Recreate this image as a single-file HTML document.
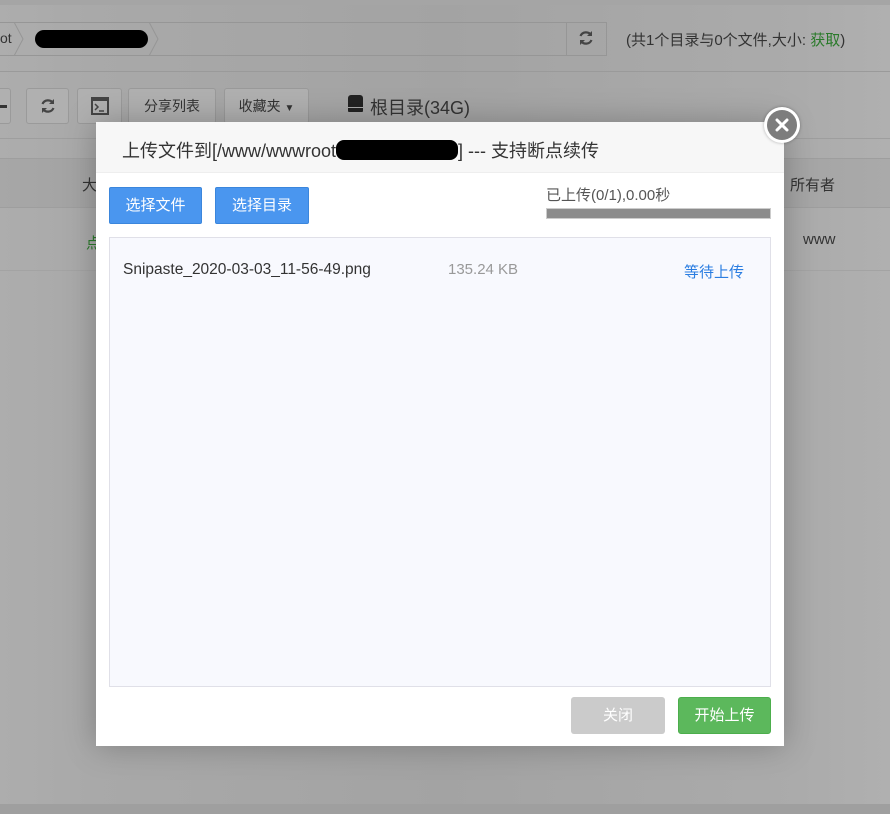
<!DOCTYPE html>
<html style="background:#afafaf"><head><meta charset="utf-8"><style>
*{box-sizing:border-box;margin:0;padding:0}
body{width:890px;height:814px;overflow:hidden;background:#afafaf;font-family:"Liberation Sans","Noto Sans CJK SC",sans-serif;position:relative;font-size:14px;color:#333}
.a{position:absolute}
.btn{position:absolute;border:1px solid #9a9a9a;border-radius:3px;background:#b0b0b0;color:#333;font-size:14px;text-align:center;line-height:34px}
</style></head><body>
<div class="a" style="left:0;top:0;width:890px;height:814px;background:linear-gradient(90deg,#adadad 0%,#a9a9a9 10%,#a3a3a3 50%,#ababab 90%,#b0b0b0 100%)"></div>
<div class="a" style="left:0;top:0;width:890px;height:5px;background:#a5a5a5"></div>
<div class="a" style="left:-2px;top:22px;width:609px;height:34px;border:1px solid #969696"></div>
<div class="a" style="left:0;top:30px;font-size:14px;color:#333">ot</div>
<svg class="a" style="left:0;top:22px" width="170" height="34"><path d="M14 0 L23 17 L14 34" fill="none" stroke="#969696"/><path d="M149 0 L158 17 L149 34" fill="none" stroke="#969696"/></svg>
<div class="a" style="left:35px;top:30px;width:113px;height:18px;background:#000;border-radius:9px"></div>
<div class="a" style="left:566px;top:22px;width:41px;height:34px;border-left:1px solid #969696"></div>
<svg class="a" style="left:577px;top:29px" width="18" height="18" viewBox="0 0 18 18"><path d="M14 6 A6 6 0 0 0 3.5 7" fill="none" stroke="#444" stroke-width="2.2"/><path d="M4 12 A6 6 0 0 0 14.5 11" fill="none" stroke="#444" stroke-width="2.2"/><path d="M15 2 L15 7 L10 7Z" fill="#444"/><path d="M3 16 L3 11 L8 11Z" fill="#444"/></svg>
<div class="a" style="left:626px;top:29px;font-size:15px;color:#333">(共1个目录与0个文件,大小: <span style="color:#2a7a2a">获取</span>)</div>
<div class="a" style="left:0;top:71px;width:890px;height:1px;background:#9a9a9a"></div>
<div class="btn" style="left:-5px;top:88px;width:16px;height:36px"><div style="position:absolute;left:4px;top:16px;width:7px;height:3px;background:#333"></div></div>
<div class="btn" style="left:26px;top:88px;width:43px;height:36px"><svg style="margin-top:8px" width="18" height="18" viewBox="0 0 18 18"><path d="M14 6 A6 6 0 0 0 3.5 7" fill="none" stroke="#444" stroke-width="2.2"/><path d="M4 12 A6 6 0 0 0 14.5 11" fill="none" stroke="#444" stroke-width="2.2"/><path d="M15 2 L15 7 L10 7Z" fill="#444"/><path d="M3 16 L3 11 L8 11Z" fill="#444"/></svg></div>
<div class="btn" style="left:77px;top:88px;width:45px;height:36px"><svg style="margin-top:8px" width="18" height="18"><rect x="1" y="1" width="16" height="16" fill="none" stroke="#444" stroke-width="2"/><rect x="1" y="1" width="16" height="3" fill="#444"/><path d="M4 7 L7 10 L4 13 M8 14 H13" stroke="#444" stroke-width="1.5" fill="none"/></svg></div>
<div class="btn" style="left:128px;top:88px;width:88px;height:36px">分享列表</div>
<div class="btn" style="left:224px;top:88px;width:85px;height:36px">收藏夹 <span style="font-size:10px">▼</span></div>
<div class="a" style="left:348px;top:95px;width:15px;height:17px;background:#222;border-radius:3px 3px 1px 1px"></div>
<div class="a" style="left:348px;top:107px;width:15px;height:1px;background:#aaa"></div>
<div class="a" style="left:370px;top:94px;font-size:18px;color:#333">根目录(34G)</div>
<div class="a" style="left:0;top:138px;width:890px;height:1px;background:#9e9e9e"></div>
<div class="a" style="left:0;top:158px;width:890px;height:50px;background:rgba(0,0,0,.03);border-top:1px solid #9e9e9e;border-bottom:1px solid #9e9e9e"></div>
<div class="a" style="left:82px;top:174px;font-size:15px">大</div>
<div class="a" style="left:790px;top:174px;font-size:15px">所有者</div>
<div class="a" style="left:86px;top:232px;color:#2a7a2a;font-size:15px">点</div>
<div class="a" style="left:803px;top:231px;color:#333;font-size:15px">www</div>
<div class="a" style="left:0;top:270px;width:890px;height:1px;background:#a3a3a3"></div>
<div class="a" style="left:0;top:804px;width:890px;height:10px;background:#9f9f9f"></div>

<div class="a" style="left:96px;top:122px;width:688px;height:624px;background:#fff;box-shadow:0 0 30px rgba(0,0,0,.25)">
 <div class="a" style="left:0;top:0;width:688px;height:51px;background:#f7f7f7;border-bottom:1px solid #eee"></div>
 <div class="a" style="left:26px;top:15px;font-size:18px;color:#333;white-space:nowrap">上传文件到[/www/wwwroot<span style="display:inline-block;width:122px;height:20px;background:#000;border-radius:8px;vertical-align:-3px"></span>] --- 支持断点续传</div>
 <div class="a" style="left:13px;top:65px;width:93px;height:37px;background:#4a96ef;border:1px solid #3b86dc;border-radius:2px;color:#fff;font-size:15px;line-height:35px;text-align:center">选择文件</div>
 <div class="a" style="left:119px;top:65px;width:94px;height:37px;background:#4a96ef;border:1px solid #3b86dc;border-radius:2px;color:#fff;font-size:15px;line-height:35px;text-align:center">选择目录</div>
 <div class="a" style="left:450px;top:62px;font-size:15px;color:#555">已上传(0/1),0.00秒</div>
 <div class="a" style="left:450px;top:86px;width:225px;height:11px;background:#8c8c8c;border:1px solid #ccc"></div>
 <div class="a" style="left:13px;top:115px;width:662px;height:450px;background:#f8f9fe;border:1px solid #e0e0e8"></div>
 <div class="a" style="left:27px;top:139px;font-size:15.5px;color:#333">Snipaste_2020-03-03_11-56-49.png</div>
 <div class="a" style="left:352px;top:139px;font-size:15px;color:#999">135.24 KB</div>
 <div class="a" style="left:588px;top:139px;font-size:15px;color:#2a7de1">等待上传</div>
 <div class="a" style="left:475px;top:575px;width:94px;height:37px;background:#cbcbcb;border-radius:3px;color:#fff;font-size:15px;line-height:37px;text-align:center">关闭</div>
 <div class="a" style="left:582px;top:575px;width:93px;height:37px;background:#5cb85c;border:1px solid #4cae4c;border-radius:3px;color:#fff;font-size:15px;line-height:35px;text-align:center">开始上传</div>
</div>
<div class="a" style="left:764px;top:107px;width:36px;height:36px;border-radius:50%;background:#fff;box-shadow:0 0 3px rgba(0,0,0,.3)"></div>
<div class="a" style="left:767px;top:110px;width:30px;height:30px;border-radius:50%;background:#7d7d7d"></div>
<svg class="a" style="left:767px;top:110px" width="30" height="30"><path d="M10 10 L20 20 M20 10 L10 20" stroke="#fff" stroke-width="3" stroke-linecap="round"/></svg>
</body></html>
